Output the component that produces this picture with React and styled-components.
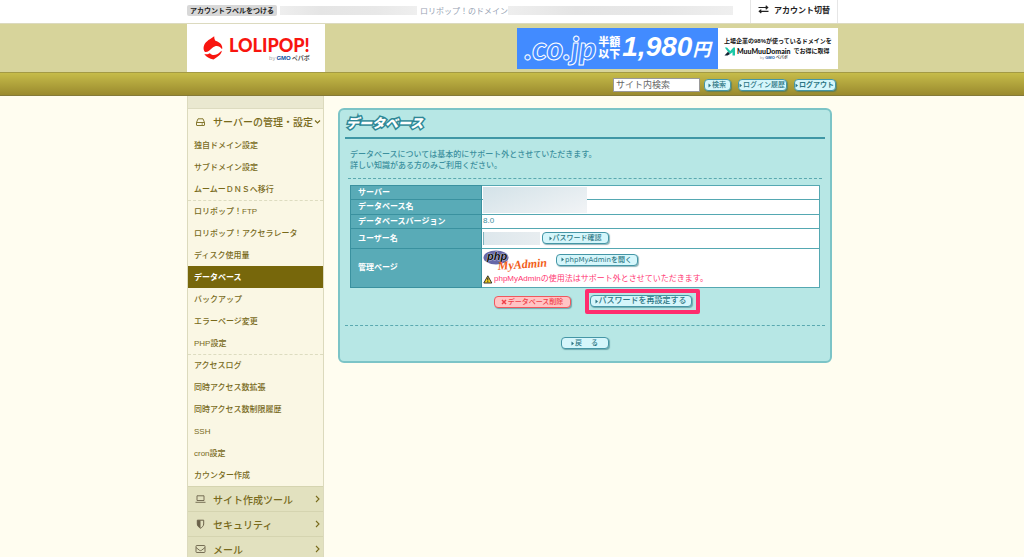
import React from 'react';
import styled, { createGlobalStyle, css } from 'styled-components';

const GlobalStyle = createGlobalStyle`
  * {
    box-sizing: border-box;
  }
  body {
    margin: 0;
    background: #fffdf0;
    color: #3c909e;
    font-family: 'Liberation Sans', 'Noto Sans CJK JP', sans-serif;
    font-size: 8px;
    overflow-x: hidden;
  }
  button, input {
    font-family: inherit;
  }
  a {
    text-decoration: none;
    color: inherit;
  }
`

const Page = styled.div`
  height: 100vh;
  overflow: hidden;
`

const Container = styled.div`
  display: flex;
  width: 100%;
  max-width: 652px;
  height: 100%;
  margin: 0 auto;
  padding-left: 1px;
`

const TopBar = styled.div`
  height: 24px;
  background: #fff;
  border-bottom: 1px solid #dcdabf;
`

const TopItems = styled.div`
  display: flex;
  flex: 1;
  align-items: center;
  padding-bottom: 3px;
  color: #98a3b3;
`

const LabelButton = styled.button`
  height: 11px;
  padding: 0 3px;
  border: none;
  border-radius: 2px;
  background: #d8d8d8;
  color: #222;
  font-size: 7px;
  font-weight: bold;
  line-height: 11px;
  white-space: nowrap;
`

const Masked = styled.span`
  width: ${props => props.$width}px;
  height: ${props => props.$height || 9}px;
  background: ${props => props.$tint || 'linear-gradient(90deg, #eee, #e5e5e5 30%, #e8e8e8 70%, #efefef)'};
`

const DomainLabel = styled.span`
  margin: 0 0 0 3px;
  white-space: nowrap;
`

const SwitchButton = styled.button`
  display: flex;
  align-items: center;
  justify-content: center;
  gap: 5px;
  width: 88px;
  padding: 0 0 4px;
  border: solid #e6e6e6;
  border-width: 0 1px;
  background: #fff;
  color: #222;
  font-size: 8px;
  font-weight: bold;
  white-space: nowrap;
`

const Header = styled.header`
  height: 48px;
  background: #d7d49b;
`

const HeaderInner = styled(Container)`
  justify-content: space-between;
`

const Logo = styled.a`
  display: flex;
  align-items: center;
  gap: 6px;
  width: 138px;
  padding-left: 16px;
  background: #fff;
  color: #f8150f;
`

const LogoText = styled.span`
  display: flex;
  flex-direction: column;
  align-items: flex-end;
  padding-top: 3px;
  font-family: Lato, sans-serif;
  font-size: 18px;
  font-weight: 900;
  line-height: 17px;
`

const GmoText = styled.span`
  display: flex;
  gap: 1px;
  color: #555;
  font-family: 'Liberation Sans', 'Noto Sans CJK JP', sans-serif;
  font-size: ${props => props.$small ? 4 : 6}px;
  font-weight: bold;
  line-height: ${props => props.$small ? 4 : 8}px;
  white-space: nowrap;
  b {
    color: #0a4ea0;
  }
  small {
    color: #aaa;
    font-size: inherit;
    font-weight: normal;
  }
`

const Banner = styled.a`
  display: flex;
  align-self: center;
  width: 321px;
  height: 41px;
  background: #fff;
`

const BannerPrice = styled.span`
  display: flex;
  flex: none;
  align-items: center;
  justify-content: center;
  gap: 2px;
  width: 201px;
  background: #428bff;
  color: #fff;
  font-weight: bold;
  white-space: nowrap;
`

const Outlined = styled.span`
  color: #428bff;
  font-family: Lato, sans-serif;
  font-size: 32px;
  font-style: italic;
  font-weight: 900;
  line-height: 36px;
  -webkit-text-stroke: 1px #fff;
`

const Half = styled.span`
  font-size: 11px;
  font-weight: 900;
  line-height: 12px;
`

const Price = styled.span`
  display: flex;
  align-items: baseline;
  font-size: 28px;
  font-style: italic;
  line-height: 36px;
  small {
    font-size: 18px;
  }
`

const BannerNote = styled.span`
  display: flex;
  flex: 1;
  flex-direction: column;
  justify-content: center;
  padding-left: 6px;
  color: #111;
  font-size: 6px;
  font-weight: bold;
  line-height: 10px;
  white-space: nowrap;
`

const MuuRow = styled.span`
  display: flex;
  align-items: center;
  gap: 1px;
  svg {
    flex: none;
  }
`

const MuuName = styled.span`
  margin-right: 2px;
  font-family: Lato, sans-serif;
  font-size: 7px;
  font-weight: 900;
`

const MuuBy = styled.span`
  display: flex;
  padding-left: 36px;
`

const ToolBar = styled.div`
  height: 24px;
  border-top: 1px solid #a39a45;
  border-bottom: 1px solid #857a38;
  background: linear-gradient(#c6bc4a, #9a8a2e);
`

const SearchForm = styled.form`
  display: flex;
  flex: 1;
  align-items: center;
  justify-content: flex-end;
  padding: 2px 2px 0 0;
`

const SearchInput = styled.input`
  width: 87px;
  height: 14px;
  margin-right: 4px;
  padding: 0 2px;
  border: 1px solid #999;
  background: #fff;
  color: #555;
  font-size: 9px;
  &::placeholder {
    color: #666;
  }
`

const PillButton = styled.button`
  display: inline-flex;
  flex: none;
  align-items: center;
  justify-content: center;
  width: ${props => props.$width}px;
  height: 12px;
  margin: 0;
  padding: 0 1px 0 0;
  border: 1px solid #4596a6;
  border-radius: 4px;
  background: #d5f6fb;
  box-shadow: 1px 1px 1px rgba(40, 110, 120, 0.5);
  color: #2b7583;
  font-family: 'DejaVu Sans', 'Noto Sans CJK JP', sans-serif;
  font-size: ${props => props.$size || 7}px;
  font-weight: ${props => props.$bold ? 'bold' : '500'};
  line-height: 10px;
  white-space: pre;
  ${props => props.$danger && css`
    border-color: #f0585e;
    background: #ffc4c4;
    color: #ef3f48;
  `}
`

const NavPill = styled(PillButton)`
  & + & {
    margin-left: 7px;
  }
`

const Columns = styled(Container)`
  height: auto;
  align-items: flex-start;
  gap: 14px;
`

const Sidebar = styled.nav`
  flex: none;
  width: 137px;
  padding-top: 12px;
  border: solid #dcdabd;
  border-width: 0 1px;
  background: #eae8d0;
  color: #786a1b;
`

const Category = styled.a`
  display: flex;
  align-items: center;
  height: ${props => props.$open ? 26 : 25}px;
  padding: 0 2px 0 7px;
  border-top: 1px solid ${props => props.$open ? '#dddbc0' : '#d5d4b0'};
  background: ${props => props.$open ? '#faf7e4' : '#e2e1bf'};
  font-size: 10px;
  font-weight: 500;
  white-space: nowrap;
  svg {
    flex: none;
  }
  svg:last-child {
    margin-left: auto;
  }
`

const CategoryName = styled.span`
  margin-left: 7px;
`

const MenuList = styled.ul`
  margin: 0;
  padding: 0;
  background: #faf7e4;
  list-style: none;
`

const MenuItem = styled.li`
  height: 22px;
  padding-left: 6px;
  border-top: 1px ${props => props.$divider ? 'dashed #dddcc0' : 'solid transparent'};
  font-size: 8px;
  line-height: 21px;
  font-weight: 500;
  ${props => props.$active && css`
    border-color: #77670b;
    background: #77670b;
    color: #fff;
    font-weight: bold;
  `}
`

const Panel = styled.main`
  flex: 1;
  margin: 12px 6px 0 0;
  padding: 6px 5px 12px;
  border: 2px solid #7cc4c7;
  border-radius: 6px;
  background: #b7e7e5;
`

const Title = styled.h1`
  height: 23px;
  margin: 0;
  padding-left: 1px;
  border-bottom: 2px solid #3f97a5;
  color: #fff;
  font-size: 13px;
  font-style: italic;
  font-weight: 900;
  line-height: 16px;
  -webkit-text-stroke: 3px #2e8796;
  paint-order: stroke fill;
  stroke-linejoin: round;
`

const Lead = styled.p`
  margin: 0 3px;
  padding: 10px 2px 7px;
  border-bottom: 1px dashed #5aa9b0;
  font-size: 8px;
  font-weight: 500;
  line-height: 11px;
`

const InfoTable = styled.table`
  width: calc(100% - 10px);
  margin: 6px 5px 0;
  border-collapse: collapse;
  background: #fff;
`

const Row = styled.tr`
  height: ${props => props.$height}px;
`

const Th = styled.th`
  width: 131px;
  padding: 0 0 0 7px;
  border: 1px solid #3a919f;
  background: #59abb7;
  color: #fff;
  font-size: 8px;
  line-height: 12px;
  text-align: left;
`

const Td = styled.td`
  position: relative;
  padding: 0 1px 1px;
  border: 1px solid #55a8b2;
  font-size: 8px;
  line-height: 12px;
`

const Line = styled.div`
  display: flex;
  align-items: center;
  gap: ${props => props.$gap || 0}px;
`

// spans the server and database name rows
const MaskedRows = styled(Masked)`
  position: absolute;
  top: 1px;
  left: 1px;
  z-index: 1;
`

const MaskedUser = styled(Masked)`
  border-left: 1px solid #7fb4bd;
`

const Warning = styled.p`
  display: flex;
  align-items: center;
  gap: 1px;
  margin: 4px 0 0;
  color: #ff3672;
  font-size: 8px;
  line-height: 12px;
  white-space: nowrap;
`

const Actions = styled.div`
  display: flex;
  align-items: center;
  justify-content: center;
  gap: 14px;
  margin-top: 1px;
  padding-left: 24px;
`

const Highlight = styled.span`
  display: flex;
  padding: 2px 4px 3px 1px;
  border: 4px solid #ff2d6e;
  border-radius: 2px;
`

const Footer = styled.div`
  display: flex;
  justify-content: center;
  margin-top: 11px;
  padding-top: 11px;
  border-top: 1px dashed #5aa9b0;
`

const menu = [
  { name: '独自ドメイン設定' },
  { name: 'サブドメイン設定' },
  { name: 'ムームーＤＮＳへ移行' },
  { name: 'ロリポップ！FTP', divider: true },
  { name: 'ロリポップ！アクセラレータ' },
  { name: 'ディスク使用量' },
  { name: 'データベース', active: true },
  { name: 'バックアップ' },
  { name: 'エラーページ変更' },
  { name: 'PHP設定' },
  { name: 'アクセスログ', divider: true },
  { name: '同時アクセス数拡張' },
  { name: '同時アクセス数制限履歴' },
  { name: 'SSH' },
  { name: 'cron設定' },
  { name: 'カウンター作成' },
]

const Arrow = () => (
  <svg width="4" height="5" viewBox="0 0 4 5" aria-hidden="true">
    <path d="M0.5 0.5 L3 2.5 L0.5 4.5Z" fill="currentColor" />
  </svg>
)

const Cross = () => (
  <svg width="7" height="6" viewBox="0 0 7 6" aria-hidden="true">
    <path d="M1 1 L5 5 M5 1 L1 5" stroke="currentColor" strokeWidth="1.5" />
  </svg>
)

const Chevron = ({ down }) => (
  <svg width="7" height="8" viewBox="0 0 7 8" fill="none" stroke="currentColor" strokeWidth="1.1" aria-hidden="true">
    <path d={down ? 'M1 2.5 L3.5 5 L6 2.5' : 'M2 1 L5 4 L2 7'} />
  </svg>
)

const DriveIcon = () => (
  <svg width="11" height="10" viewBox="0 0 11 10" fill="none" stroke="currentColor" strokeWidth="0.9" aria-hidden="true">
    <path d="M1.5 5.5 L3 1.8 H8 L9.5 5.5 V8 Q9.5 8.5 9 8.5 H2 Q1.5 8.5 1.5 8Z M1.5 5.5 H9.5 M6.5 7 H8" />
  </svg>
)

const LaptopIcon = () => (
  <svg width="11" height="10" viewBox="0 0 11 10" fill="none" stroke="#6b624a" strokeWidth="0.9" aria-hidden="true">
    <path d="M2 1.8 H9 V6.5 H2Z M0.5 8.3 H10.5" />
  </svg>
)

const ShieldIcon = () => (
  <svg width="11" height="10" viewBox="0 0 11 10" aria-hidden="true">
    <path d="M2.3 1.2 H8.7 V5 C8.7 7 7 8.4 5.5 9.2 C4 8.4 2.3 7 2.3 5Z" fill="none" stroke="#6b624a" />
    <path d="M2.3 1.2 H5.5 V9.2 C4 8.4 2.3 7 2.3 5Z" fill="#6b624a" />
  </svg>
)

const MailIcon = () => (
  <svg width="11" height="10" viewBox="0 0 11 10" fill="none" stroke="#6b624a" strokeWidth="0.9" aria-hidden="true">
    <rect x="1" y="1.5" width="9" height="7" rx="0.8" />
    <path d="M1 3.5 L4.5 6.3 Q5.5 7 6.5 6.3 L10 3.5" />
  </svg>
)

const SwapIcon = () => (
  <svg width="11" height="9" viewBox="0 0 11 9" fill="none" stroke="currentColor" strokeWidth="1.2" aria-hidden="true">
    <path d="M0.5 2.5 H9.5 M7.7 0.8 L9.7 2.5 L7.7 4.2 M10.5 6.3 H1.5 M3.3 4.6 L1.3 6.3 L3.3 8" />
  </svg>
)

const LolipopMark = () => (
  <svg width="20" height="24" viewBox="0 0 20 24" aria-hidden="true">
    <path d="M11.2 0.3 C11.3 2.5 11.6 3.6 12.4 4.8 C16.6 6 19.3 8.6 19.3 12.2 C19.2 13 19 13.2 18.4 12.6 C16.5 9.6 12.500 9.200 9.500 11.800 C7 14 4.500 16.500 2 16 C0.500 14.500 0 11.500 1.200 9 C3 5 7.500 3 11.200 0.300Z" fill="#f8150f" />
    <path d="M1.300 18 C4 18.800 5.500 18 7 17.300 C8 19.200 11.500 19.600 14 18.300 C16 17.200 17.200 15.800 18.800 14.800 C18.600 18.500 14.500 21 10.500 23.600 C6.500 22.600 3 21 1.300 18Z" fill="#f8150f" />
  </svg>
)

const MuuMark = () => (
  <svg width="12" height="9" viewBox="0 0 12 9" aria-hidden="true">
    <path d="M0.800 0.500 L3 0.500 L6.200 4 L9.500 0.500 H11 V8.500 H8.500 V5.200 L6.200 7 L3.800 4.500Z" fill="#1cc8a8" />
    <path d="M0.500 8.500 L4 4.800 L6 7 L3.500 8.500Z" fill="#123" />
  </svg>
)

const PhpMyAdminLogo = () => (
  <svg width="62" height="19" viewBox="0 0 62 19" overflow="visible" role="img" aria-label="phpMyAdmin">
    <ellipse cx="13" cy="7.5" rx="12.5" ry="7" fill="#6668a8" />
    <text x="4" y="10" fontFamily="Liberation Sans" fontSize="11" fontWeight="bold" fontStyle="italic" fill="#111" stroke="#fff" strokeWidth="0.6" paintOrder="stroke">php</text>
    <text x="15" y="20" fontFamily="Liberation Serif" fontSize="12" fontWeight="bold" fontStyle="italic" fill="#f2601b" transform="rotate(-4 15 20)">MyAdmin</text>
  </svg>
)

const WarnIcon = () => (
  <svg width="10" height="9" viewBox="0 0 10 9" aria-hidden="true">
    <path d="M4.8 0.8 L8.8 8 H0.8Z" fill="#f5d21c" stroke="#333" strokeWidth="1" strokeLinejoin="round" />
    <path d="M4.8 2.8 V5.500 M4.8 6.200 V7.200" stroke="#222" />
  </svg>
)

const SideMenu = () => (
  <Sidebar>
    <Category href="#server" $open>
      <DriveIcon />
      <CategoryName>サーバーの管理・設定</CategoryName>
      <Chevron down />
    </Category>
    <MenuList>
      {menu.map(item => (
        <MenuItem key={item.name} $divider={item.divider} $active={item.active}>
          <a href="#menu">{item.name}</a>
        </MenuItem>
      ))}
    </MenuList>
    <Category href="#tools">
      <LaptopIcon />
      <CategoryName>サイト作成ツール</CategoryName>
      <Chevron />
    </Category>
    <Category href="#security">
      <ShieldIcon />
      <CategoryName>セキュリティ</CategoryName>
      <Chevron />
    </Category>
    <Category href="#mail">
      <MailIcon />
      <CategoryName>メール</CategoryName>
      <Chevron />
    </Category>
  </Sidebar>
)

const DatabaseTable = () => (
  <InfoTable>
    <tbody>
      <Row $height={14}>
        <Th scope="row">サーバー</Th>
        <Td><MaskedRows $width={104} $height={26} $tint="linear-gradient(160deg, #d3e2e8, #f2f4f6)" /></Td>
      </Row>
      <Row $height={15}>
        <Th scope="row">データベース名</Th>
        <Td />
      </Row>
      <Row $height={14}>
        <Th scope="row">データベースバージョン</Th>
        <Td>8.0</Td>
      </Row>
      <Row $height={20}>
        <Th scope="row">ユーザー名</Th>
        <Td>
          <Line $gap={2}>
            <MaskedUser $width={57} $height={13} $tint="linear-gradient(90deg, #dde7ec, #e8edf0)" />
            <PillButton type="button" $width={67}><Arrow />パスワード確認</PillButton>
          </Line>
        </Td>
      </Row>
      <Row $height={39}>
        <Th scope="row">管理ページ</Th>
        <Td>
          <Line $gap={11}>
            <PhpMyAdminLogo />
            <PillButton type="button" $width={82}><Arrow />phpMyAdminを開く</PillButton>
          </Line>
          <Warning><WarnIcon />phpMyAdminの使用法はサポート外とさせていただきます。</Warning>
        </Td>
      </Row>
    </tbody>
  </InfoTable>
)

const App = () => (
  <Page>
    <GlobalStyle />
    <TopBar>
      <Container>
        <TopItems>
          <LabelButton type="button">アカウントラベルをつける</LabelButton>
          <DomainLabel />
          <Masked $width={137} />
          <DomainLabel>ロリポップ！のドメイン</DomainLabel>
          <Masked $width={225} />
        </TopItems>
        <SwitchButton type="button"><SwapIcon />アカウント切替</SwitchButton>
      </Container>
    </TopBar>
    <Header>
      <HeaderInner>
        <Logo href="#top">
          <LolipopMark />
          <LogoText>
            LOLIPOP!
            <GmoText><small>by</small><b>GMO</b>ペパボ</GmoText>
          </LogoText>
        </Logo>
        <Banner href="#campaign">
          <BannerPrice>
            <Outlined>.co.jp</Outlined>
            <Half>半額<br />以下</Half>
            <Price>1,980<small>円</small></Price>
          </BannerPrice>
          <BannerNote>
            <span>上場企業の98%が使っているドメインを</span>
            <MuuRow><MuuMark /><MuuName>MuuMuuDomain</MuuName>でお得に取得</MuuRow>
            <MuuBy><GmoText $small><small>by</small><b>GMO</b>ペパボ</GmoText></MuuBy>
          </BannerNote>
        </Banner>
      </HeaderInner>
    </Header>
    <ToolBar>
      <Container>
        <SearchForm>
          <SearchInput type="text" aria-label="サイト内検索" placeholder="サイト内検索" />
          <NavPill type="submit" $width={27}><Arrow />検索</NavPill>
          <NavPill type="button" $width={49}><Arrow />ログイン履歴</NavPill>
          <NavPill type="button" $width={42} $bold><Arrow />ログアウト</NavPill>
        </SearchForm>
      </Container>
    </ToolBar>
    <Columns>
      <SideMenu />
      <Panel>
        <Title>データベース</Title>
        <Lead>
          データベースについては基本的にサポート外とさせていただきます。<br />
          詳しい知識がある方のみご利用ください。
        </Lead>
        <DatabaseTable />
        <Actions>
          <PillButton type="button" $width={77} $danger><Cross />データベース削除</PillButton>
          <Highlight>
            <PillButton type="button" $width={102} $size={8}><Arrow />パスワードを再設定する</PillButton>
          </Highlight>
        </Actions>
        <Footer>
          <PillButton type="button" $width={48}><Arrow />戻　 る</PillButton>
        </Footer>
      </Panel>
    </Columns>
  </Page>
)

export default App;
